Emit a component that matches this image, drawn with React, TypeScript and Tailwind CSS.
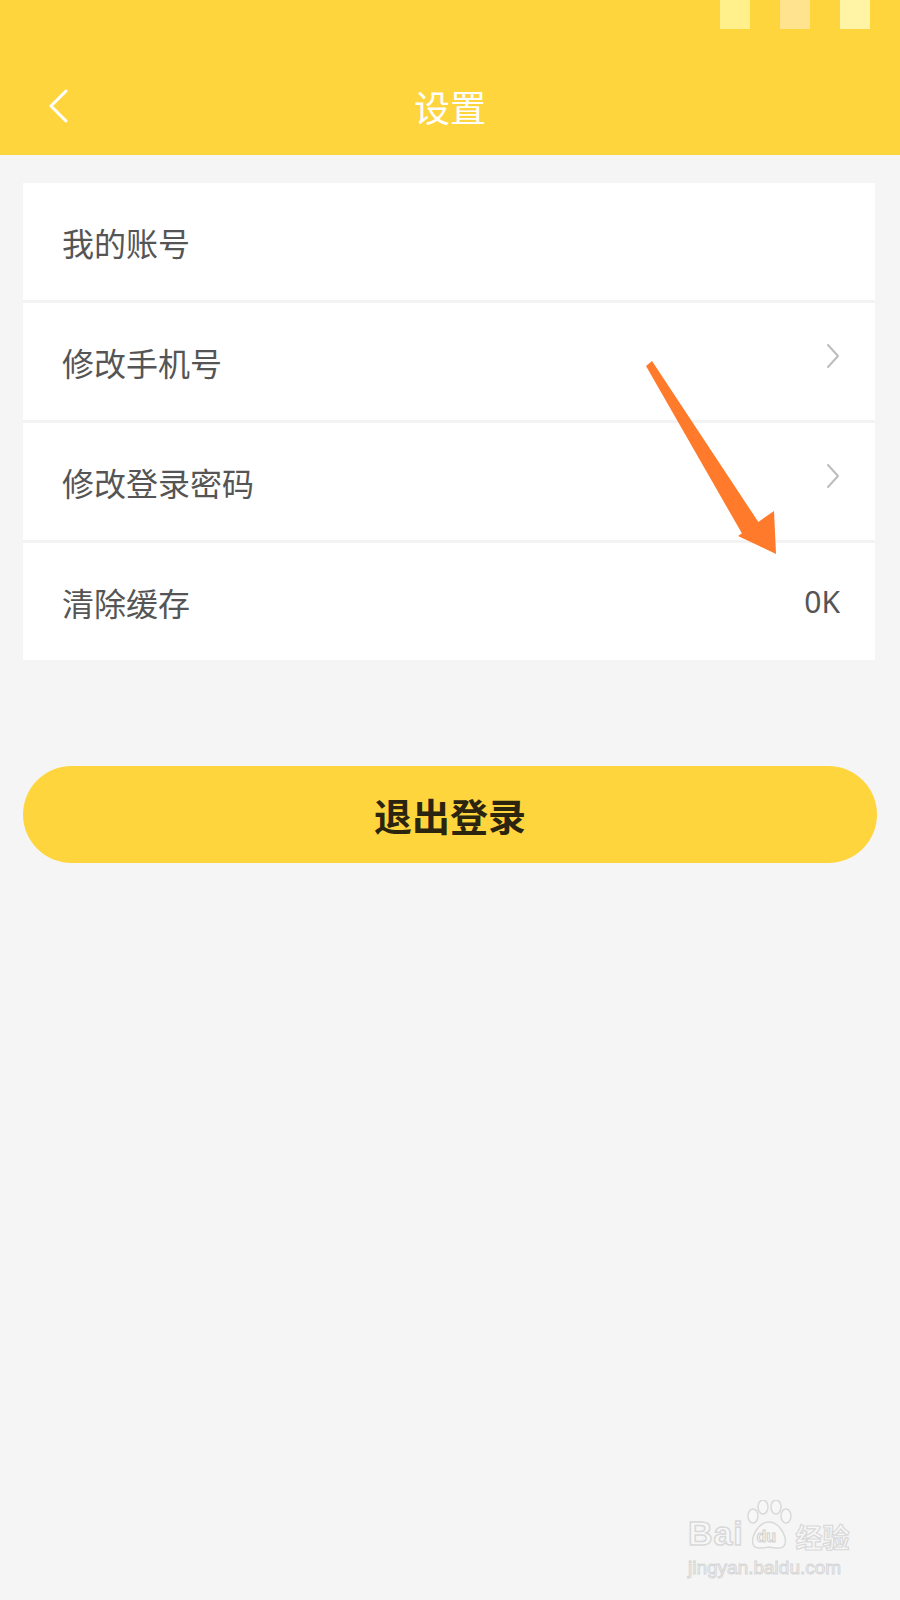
const rows = [
  { label: "我的账号", chevron: false },
  { label: "修改手机号", chevron: true },
  { label: "修改登录密码", chevron: true },
  { label: "清除缓存", value: "0K" },
];

const Chevron = () => (
  <svg width="14" height="26" viewBox="0 0 14 26" fill="none">
    <path d="M2 2 L12 13 L2 24" stroke="#bdbdbd" strokeWidth="2" strokeLinecap="round" strokeLinejoin="round" />
  </svg>
);

const App = () => {
  return (
    <div className="relative min-h-[1600px] w-full overflow-hidden bg-[#f5f5f5] font-['Noto_Sans_CJK_SC','Noto_Sans',sans-serif]">
      {/* header */}
      <div className="flex h-[155px] flex-col bg-[#ffd53d]">
        <div className="flex h-[29px] justify-end gap-[30px] pr-[30px]">
          <div className="h-[29px] w-[30px] bg-[#fff08c]" />
          <div className="h-[29px] w-[30px] bg-[#ffe38e]" />
          <div className="h-[29px] w-[30px] bg-[#fff3a6]" />
        </div>
        <div className="mt-[29px] grid h-[96px] grid-cols-[1fr_auto_1fr] items-center">
          <div className="pl-[46px]">
            <svg width="24" height="34" viewBox="0 0 24 34" fill="none">
              <path d="M20 2 L5 17 L20 32" stroke="#ffffff" strokeWidth="3" strokeLinecap="round" strokeLinejoin="round" />
            </svg>
          </div>
          <p className="text-[36px] leading-none text-white">设置</p>
          <div />
        </div>
      </div>

      {/* list */}
      <div className="ml-[23px] mt-[28px] flex w-[852px] flex-col bg-white">
        {rows.map((row, i) => (
          <div key={row.label} className="flex flex-col">
            {i > 0 && <div className="h-[3px] bg-[#f3f3f3]" />}
            <div className="flex h-[117px] items-center justify-between pl-[39px] pr-[35px]">
              <p className="text-[32px] leading-none text-[#555555]">{row.label}</p>
              {row.chevron && (
                <div className="-mt-[12px]">
                  <Chevron />
                </div>
              )}
              {row.value && (
                <p className="font-['Noto_Sans',sans-serif] text-[30px] leading-none text-[#555555]">{row.value}</p>
              )}
            </div>
          </div>
        ))}
      </div>

      {/* logout */}
      <button className="ml-[23px] mt-[106px] flex h-[97px] w-[854px] items-center justify-center rounded-full bg-[#ffd53d]">
        <span className="text-[38px] font-bold leading-none text-[#2b2510]">退出登录</span>
      </button>

      {/* annotation arrow */}
      <svg className="absolute left-0 top-0" width="900" height="600" viewBox="0 0 900 600" fill="none">
        <polygon points="646,366 652,361 761,526 744,537" fill="#ff7a2a" />
        <polygon points="738,536 774,511 776,554" fill="#ff7a2a" />
      </svg>

      {/* watermark */}
      <div className="absolute left-[688px] top-[1500px] flex flex-col items-start text-white">
        <div className="flex items-end">
          <span className="text-[34px] font-bold leading-none tracking-wide text-[#f7f7f7] [-webkit-text-stroke:1.5px_#d9d9d9] font-['Liberation_Sans',sans-serif]">
            Bai
          </span>
          <div className="relative mx-[2px] h-[50px] w-[48px]">
            <svg width="48" height="50" viewBox="0 0 48 50" fill="none">
              <g fill="#f7f7f7" stroke="#d9d9d9" strokeWidth="1.5">
                <ellipse cx="8" cy="16" rx="5" ry="7" />
                <ellipse cx="18" cy="7" rx="5" ry="7" />
                <ellipse cx="31" cy="7" rx="5" ry="7" />
                <ellipse cx="41" cy="16" rx="5" ry="7" />
                <path d="M24 22 C14 22 6 36 8 44 C10 50 18 48 24 47 C30 48 38 50 40 44 C42 36 34 22 24 22 Z" />
              </g>
            </svg>
            <span className="absolute left-[11px] top-[29px] text-[16px] font-bold leading-none text-[#f7f7f7] [-webkit-text-stroke:1px_#d0d0d0] font-['Liberation_Sans',sans-serif]">
              du
            </span>
          </div>
          <span className="text-[27px] font-bold leading-none text-[#f7f7f7] [-webkit-text-stroke:1.2px_#d9d9d9]">经验</span>
        </div>
        <span className="mt-[8px] text-[19px] leading-none text-[#f7f7f7] [-webkit-text-stroke:1px_#d6d6d6] font-['Liberation_Sans',sans-serif]">
          jingyan.baidu.com
        </span>
      </div>
    </div>
  );
};

export default App;
